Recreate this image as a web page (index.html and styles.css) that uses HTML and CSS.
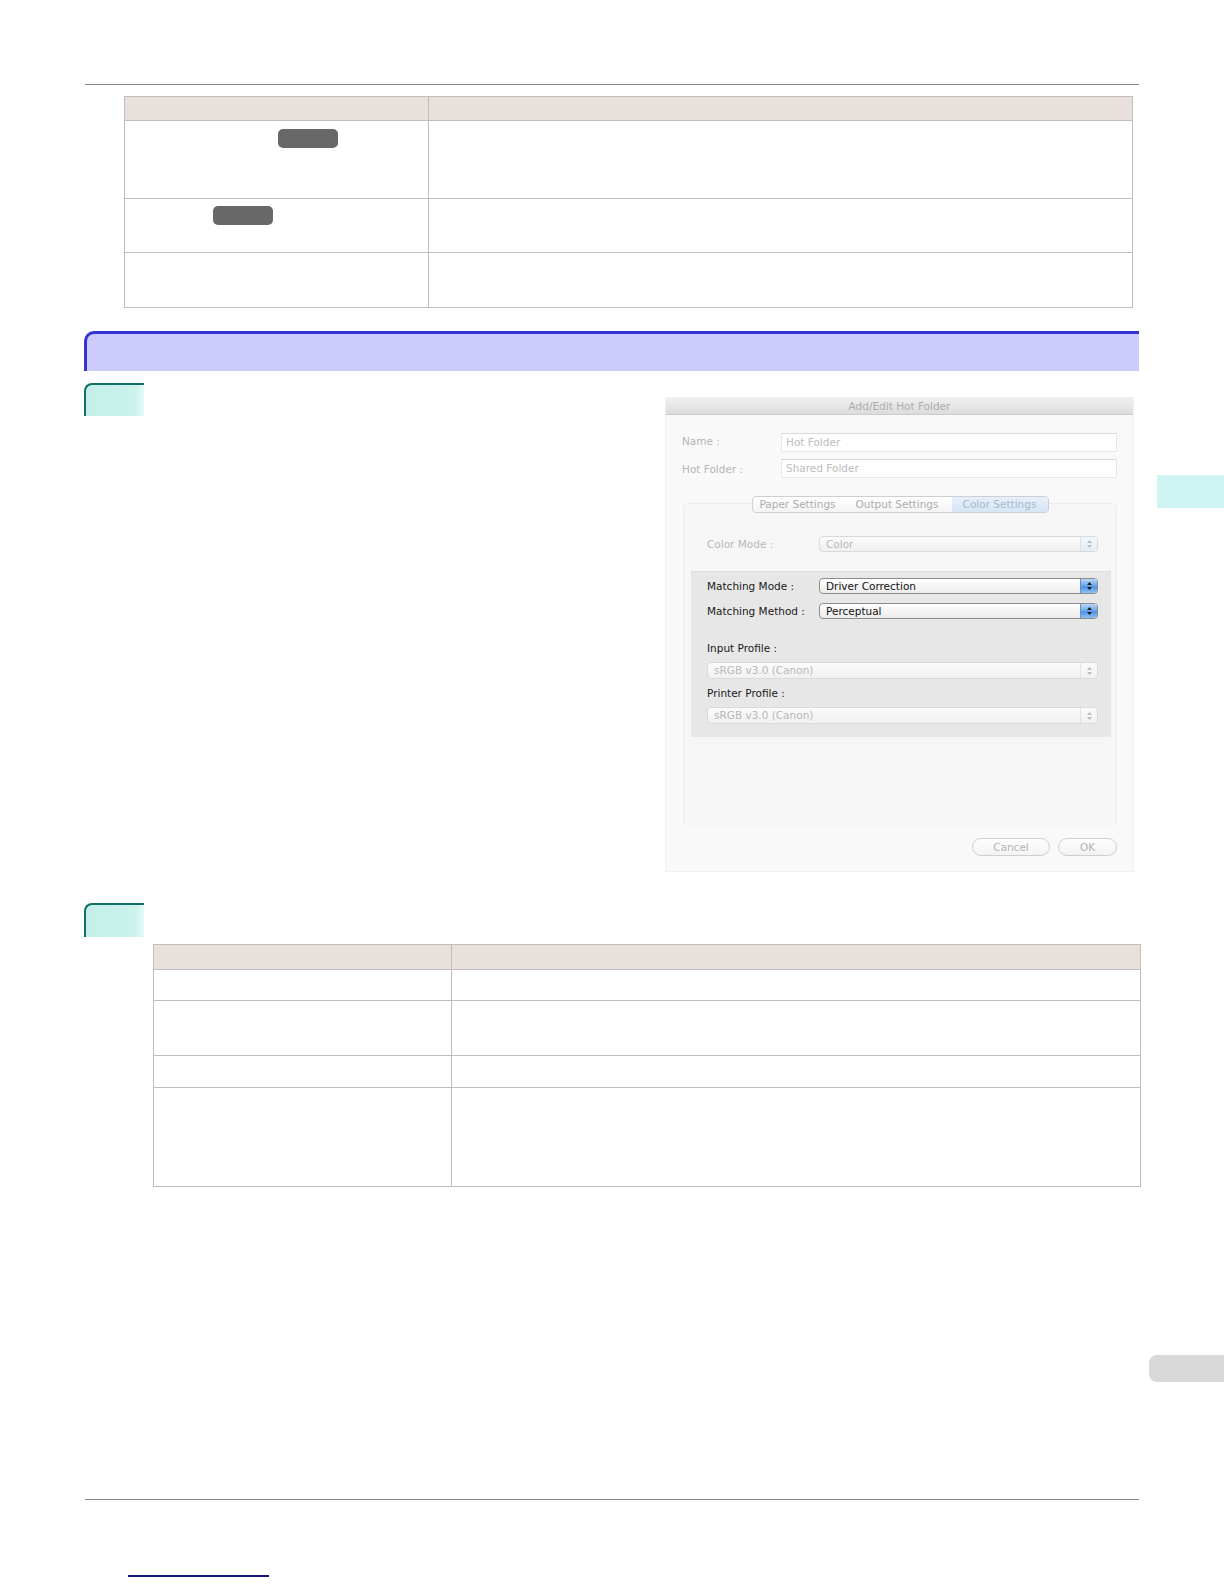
FILE: index.html
```html
<!DOCTYPE html>
<html lang="en">
<head>
  <meta charset="UTF-8" />
  <meta name="viewport" content="width=device-width, initial-scale=1.0"/>
  <title>Color Settings</title>
  <link rel="stylesheet" href="styles.css">
</head>
<body>
  <div class="page">
    <div class="main">
      <div class="rule"></div>

      <table class="info info-top">
        <tr class="head"><th class="c1"></th><th></th></tr>
        <tr class="h78"><td><span class="key key-a"></span></td><td></td></tr>
        <tr class="h54"><td><span class="key key-b"></span></td><td></td></tr>
        <tr class="h55"><td></td><td></td></tr>
      </table>

      <div class="section"></div>

      <div class="step">
        <div class="step-num"></div>
        <div class="step-body">
          <div class="dialog">
            <div class="dlg-title">Add/Edit Hot Folder</div>
            <div class="dlg-form">
              <div class="row">
                <span class="lbl raised">Name :</span>
                <span class="field">Hot Folder</span>
              </div>
              <div class="row">
                <span class="lbl">Hot Folder :</span>
                <span class="field">Shared Folder</span>
              </div>

              <div class="group">
                <div class="tabs">
                  <span class="tab-item w1">Paper Settings</span>
                  <span class="tab-item w2">Output Settings</span>
                  <span class="tab-item w3 on">Color Settings</span>
                </div>

                <div class="cm-row">
                  <span class="lbl2">Color Mode :</span>
                  <div class="popup off tint">
                    <span class="val">Color</span>
                    <span class="arr"><svg width="7" height="10" viewBox="0 0 7 10"><path d="M3.5 1L6 4H1z M3.5 9L6 6H1z"/></svg></span>
                  </div>
                </div>

                <div class="panel">
                  <div class="prow">
                    <span class="lbl2">Matching Mode :</span>
                    <div class="popup">
                      <span class="val">Driver Correction</span>
                      <span class="arr"><svg width="7" height="10" viewBox="0 0 7 10"><path d="M3.5 1L6 4H1z M3.5 9L6 6H1z"/></svg></span>
                    </div>
                  </div>
                  <div class="prow gap9">
                    <span class="lbl2">Matching Method :</span>
                    <div class="popup">
                      <span class="val">Perceptual</span>
                      <span class="arr"><svg width="7" height="10" viewBox="0 0 7 10"><path d="M3.5 1L6 4H1z M3.5 9L6 6H1z"/></svg></span>
                    </div>
                  </div>

                  <div class="plabel first">Input Profile :</div>
                  <div class="popup off wide">
                    <span class="val">sRGB v3.0 (Canon)</span>
                    <span class="arr"><svg width="7" height="10" viewBox="0 0 7 10"><path d="M3.5 1L6 4H1z M3.5 9L6 6H1z"/></svg></span>
                  </div>
                  <div class="plabel">Printer Profile :</div>
                  <div class="popup off wide">
                    <span class="val">sRGB v3.0 (Canon)</span>
                    <span class="arr"><svg width="7" height="10" viewBox="0 0 7 10"><path d="M3.5 1L6 4H1z M3.5 9L6 6H1z"/></svg></span>
                  </div>
                </div>
              </div>

              <div class="dlg-foot">
                <span class="btn btn-cancel">Cancel</span>
                <span class="btn btn-ok">OK</span>
              </div>
            </div>
          </div>
        </div>
      </div>

      <div class="step step-2">
        <div class="step-num tall"></div>
      </div>

      <table class="info info-bottom">
        <tr class="head2"><th class="c1"></th><th></th></tr>
        <tr class="h31"><td></td><td></td></tr>
        <tr class="h55"><td></td><td></td></tr>
        <tr class="h32"><td></td><td></td></tr>
        <tr class="h99"><td></td><td></td></tr>
      </table>

      <div class="rule rule-bottom"></div>
      <div class="link"></div>
    </div>

    <div class="side">
      <div class="side-tab chapter"></div>
      <div class="side-tab pageno"></div>
    </div>
  </div>
</body>
</html>
```

FILE: styles.css
```css
body {
  margin: 0;
  background: #fff;
  font-family: "DejaVu Sans", Verdana, sans-serif;
  color: #333;
}

.page {
  display: flex;
  width: 1224px;
  min-height: 1584px;
}

.main {
  width: 1139px;
  padding: 84px 0 0 85px;
  box-sizing: border-box;
}

.rule {
  height: 1px;
  background: #8a8a8a;
}

/* tables */
.info {
  border-collapse: collapse;
  table-layout: fixed;
}

.info th, .info td {
  border: 1px solid #c2bdb8;
  padding: 0;
  vertical-align: top;
}

.info th {
  background: #e8e0dc;
}

.info-top {
  margin: 11px 0 0 39px;
  width: 1009px;
}

.info-top .c1 { width: 303px; }

.info-bottom {
  margin: 7px 0 0 68px;
  width: 988px;
}

.info-bottom .c1 { width: 297px; }

.head { height: 24px; }
.head2 { height: 25px; }
.h31 { height: 31px; }
.h32 { height: 32px; }
.h54 { height: 54px; }
.h55 { height: 55px; }
.h78 { height: 78px; }
.h99 { height: 99px; }

.key {
  display: block;
  width: 60px;
  height: 19px;
  background: #686868;
  border-radius: 5px;
}

.key-a { margin: 8px 0 0 153px; }
.key-b { margin: 7px 0 0 88px; }

/* section bar */
.section {
  margin: 23px 0 0 -1px;
  height: 37px;
  background: #ccccfc;
  border-top: 3px solid #3434d4;
  border-left: 3px solid #3434d4;
  border-top-left-radius: 10px;
}

/* steps */
.step {
  display: flex;
  margin-top: 12px;
}

.step-2 { margin-top: 31px; }

.step-num {
  width: 58px;
  height: 31px;
  margin-left: -1px;
  background: linear-gradient(to right, #c4efe9, #cbf2ed 85%, #e6faf7);
  border-top: 2px solid #146e68;
  border-left: 2px solid #146e68;
  border-top-left-radius: 8px;
}

.step-num.tall { height: 32px; }

.step-body {
  flex: 1;
  display: flex;
  justify-content: flex-end;
}

/* dialog screenshot */
.dialog {
  width: 467px;
  height: 473px;
  margin: 14px 5px 0 0;
  background: #f9f9f9;
  border: 1px solid #f0f0f0;
  font-size: 10.5px;
}

.dlg-title {
  height: 16px;
  line-height: 16px;
  text-align: center;
  color: #adadad;
  background: linear-gradient(#f0f0f0, #dcdcdc);
  border-bottom: 1px solid #cccccc;
}

.dlg-form {
  padding: 18px 16px 0 16px;
}

.row {
  display: flex;
  align-items: center;
  height: 19px;
}

.row + .row { margin-top: 7px; }

.lbl {
  width: 99px;
  color: #b5b5b5;
}

.lbl.raised {
  position: relative;
  top: -2px;
}

.field {
  flex: 1;
  height: 17px;
  line-height: 17px;
  padding-left: 4px;
  background: #fff;
  border: 1px solid #e8e8e8;
  border-top-color: #d8d8d8;
  color: #bcbcbc;
}

.group {
  margin: 25px 0 0 1px;
  height: 321px;
  background: #f6f6f6;
  border: 1px solid #ededed;
  border-bottom-color: #f6f6f6;
  border-radius: 5px;
}

.tabs {
  display: flex;
  width: fit-content;
  margin: -8px auto 0;
  height: 15px;
  border: 1px solid #cfcfcf;
  border-radius: 4px;
  background: linear-gradient(#ffffff, #f3f3f3);
  overflow: hidden;
}

.tab-item {
  line-height: 15px;
  text-align: center;
  color: #adadad;
}

.w1 { width: 90px; }
.w2 { width: 109px; }
.w3 { width: 96px; }

.tab-item.on {
  background: linear-gradient(#e6f0fa, #d6e6f6);
  color: #a6b9cc;
}

.cm-row {
  display: flex;
  align-items: center;
  margin-top: 23px;
  padding: 0 18px 0 23px;
}

.lbl2 {
  width: 112px;
  flex-shrink: 0;
}

.cm-row .lbl2 { color: #b8b8b8; }

.popup {
  flex: 1;
  display: flex;
  height: 14px;
  border: 1px solid #8c8c8c;
  border-radius: 4px;
  background: linear-gradient(#ffffff, #ececec);
  color: #111;
  overflow: hidden;
}

.popup .val {
  flex: 1;
  padding-left: 6px;
  line-height: 14px;
}

.popup .arr {
  width: 16px;
  display: flex;
  align-items: center;
  justify-content: center;
  border-left: 1px solid #6a8fc0;
  background: linear-gradient(#b8d6f7, #6aa6ec 50%, #4d91e6 55%, #8fc0f3);
}

.popup .arr svg { fill: #1a1a1a; }

.popup.off {
  border-color: #dadada;
  background: linear-gradient(#fbfbfb, #f1f1f1);
  color: #b8b8b8;
}

.popup.off .arr {
  border-left-color: #e2e2e2;
  background: transparent;
}

.popup.off .arr svg { fill: #bdbdbd; }

.popup.tint .arr { background: linear-gradient(#f2f7fc, #e3edf8); }

.panel {
  margin: 19px 5px 0 7px;
  padding: 6px 13px 13px 16px;
  background: #e7e7e7;
  border-top: 1px solid #dedede;
  color: #1a1a1a;
}

.prow {
  display: flex;
  align-items: center;
}

.gap9 { margin-top: 9px; }

.plabel {
  height: 14px;
  line-height: 14px;
  margin-top: 7px;
}

.plabel.first { margin-top: 22px; }

.popup.wide {
  flex: none;
  height: 15px;
  margin-top: 7px;
}

.popup.wide .val { line-height: 15px; }

.dlg-foot {
  display: flex;
  justify-content: flex-end;
  gap: 8px;
  margin-top: 12px;
}

.btn {
  height: 16px;
  line-height: 16px;
  text-align: center;
  border: 1px solid #cfcfcf;
  border-radius: 9px;
  background: linear-gradient(#fefefe, #f3f3f3);
  color: #b3b3b3;
}

.btn-cancel { width: 76px; }
.btn-ok { width: 57px; }

.rule-bottom { margin-top: 312px; }

.link {
  margin: 75px 0 0 43px;
  width: 141px;
  height: 2px;
  background: #14147a;
}

/* right margin tabs */
.side {
  flex: 1;
  display: flex;
  flex-direction: column;
}

.side-tab.chapter {
  margin: 475px 0 0 18px;
  height: 33px;
  background: #cff4f3;
}

.side-tab.pageno {
  margin: 847px 0 0 10px;
  height: 27px;
  background: #d9d9d9;
  border-radius: 8px 0 0 8px;
}
```
